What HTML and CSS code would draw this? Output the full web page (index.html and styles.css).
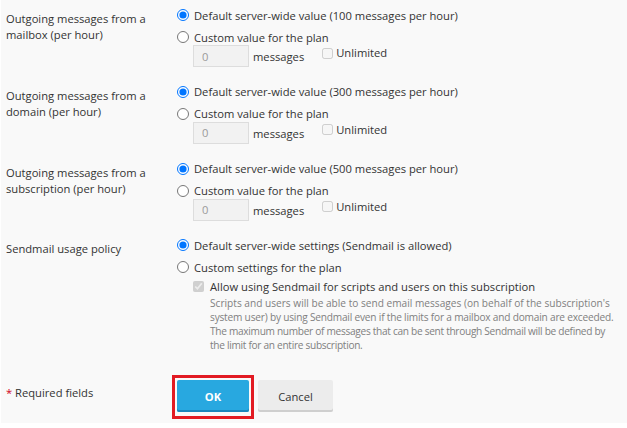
FILE: index.html
```html
<!DOCTYPE html>
<html>
<head>
<meta charset="utf-8">
<link rel="stylesheet" href="styles.css">
</head>
<body>
<div class="page">
  <div class="row">
    <div class="label">Outgoing messages from a mailbox (per hour)</div>
    <div class="field">
      <label class="opt"><input type="radio" name="r1" checked><span>Default server-wide value (100 messages per hour)</span></label>
      <label class="opt"><input type="radio" name="r1"><span>Custom value for the plan</span></label>
      <div class="limit"><input class="num" type="text" value="0" disabled><span class="unit">messages</span><label class="unl"><input type="checkbox" disabled><span>Unlimited</span></label></div>
    </div>
  </div>
  <div class="row">
    <div class="label">Outgoing messages from a domain (per hour)</div>
    <div class="field">
      <label class="opt"><input type="radio" name="r2" checked><span>Default server-wide value (300 messages per hour)</span></label>
      <label class="opt"><input type="radio" name="r2"><span>Custom value for the plan</span></label>
      <div class="limit"><input class="num" type="text" value="0" disabled><span class="unit">messages</span><label class="unl"><input type="checkbox" disabled><span>Unlimited</span></label></div>
    </div>
  </div>
  <div class="row">
    <div class="label">Outgoing messages from a subscription (per hour)</div>
    <div class="field">
      <label class="opt"><input type="radio" name="r3" checked><span>Default server-wide value (500 messages per hour)</span></label>
      <label class="opt"><input type="radio" name="r3"><span>Custom value for the plan</span></label>
      <div class="limit"><input class="num" type="text" value="0" disabled><span class="unit">messages</span><label class="unl"><input type="checkbox" disabled><span>Unlimited</span></label></div>
    </div>
  </div>
  <div class="row">
    <div class="label">Sendmail usage policy</div>
    <div class="field">
      <label class="opt"><input type="radio" name="r4" checked><span>Default server-wide settings (Sendmail is allowed)</span></label>
      <label class="opt"><input type="radio" name="r4"><span>Custom settings for the plan</span></label>
      <div class="allow">
        <label class="chk"><input type="checkbox" checked disabled><span>Allow using Sendmail for scripts and users on this subscription</span></label>
        <p class="hint"><span class="ln">Scripts and users will be able to send email messages (on behalf of the subscription's</span> <span class="ln t2">system user) by using Sendmail even if the limits for a mailbox and domain are exceeded.</span> <span class="ln tight">The maximum number of messages that can be sent through Sendmail will be defined by</span> <span class="ln tight">the limit for an entire subscription.</span></p>
      </div>
    </div>
  </div>
  <div class="actions">
    <div class="req"><span class="star">*</span> Required fields</div>
    <div class="buttons">
      <span class="highlight"><button class="btn ok" type="button">OK</button></span>
      <button class="btn cancel" type="button">Cancel</button>
    </div>
  </div>
</div>
</body>
</html>
```

FILE: styles.css
```css
* { box-sizing: border-box; }
html, body { margin: 0; padding: 0; background: #ffffff; }
body {
  font-family: "Open Sans", "Liberation Sans", sans-serif;
  font-size: 11.2px;
  color: #333333;
}
.page {
  margin-left: 1px;
  height: 423px;
  background: #f9f9f9;
  padding: 7px 0 0 5px;
}
.row {
  display: grid;
  grid-template-columns: 170px 1fr;
  margin-bottom: 16.8px;
}
.label {
  width: 150px;
  line-height: 16px;
  padding-top: 4px;
}
.field {
  display: flex;
  flex-direction: column;
}
.opt {
  display: flex;
  align-items: center;
  height: 16px;
  margin-bottom: 6px;
}
.opt + .opt { margin-bottom: 0; }
.opt input {
  width: 12px;
  height: 12px;
  margin: 0 5px 0 1px;
}
.limit {
  display: flex;
  align-items: flex-start;
  padding-left: 17px;
}
.num {
  width: 56px;
  height: 22px;
  border: 1px solid #dddddd;
  background: #f2f2f2;
  color: #9a9a9a;
  font: inherit;
  padding: 0 8px;
}
.unit {
  margin: 4px 0 0 4px;
  line-height: 16px;
}
.unl {
  display: flex;
  align-items: center;
  margin: 0 0 0 18px;
  line-height: 16px;
}
.unl input {
  width: 11px;
  height: 11px;
  margin: 0 3px 0 0;
}
.allow {
  padding-left: 17px;
  padding-top: 3px;
}
.chk {
  display: flex;
  align-items: center;
  height: 16px;
}
.chk input {
  width: 11px;
  height: 11px;
  margin: 0 6px 0 0;
}
.hint {
  margin: 2px 0 0 17px;
  font-size: 10.15px;
  line-height: 14px;
  color: #808080;
}
.ln {
  display: block;
  white-space: nowrap;
}
.tight { letter-spacing: -0.3px; }
.t2 { letter-spacing: -0.2px; }
.actions {
  display: grid;
  grid-template-columns: 166px 1fr;
  margin-top: 28px;
}
.req {
  padding-top: 5px;
  line-height: 16px;
}
.star { color: #d0021b; }
.buttons {
  display: flex;
  align-items: flex-start;
}
.highlight {
  display: inline-block;
  border: 3px solid #e21b23;
  padding: 2px 2px 4px 2px;
  margin-top: -5px;
}
.btn {
  font-family: inherit;
  font-size: 11.2px;
  height: 32px;
  border: 0;
  border-radius: 2px;
  cursor: pointer;
}
.ok {
  width: 72px;
  background: #28a8e0;
  color: #ffffff;
  font-weight: bold;
  box-shadow: inset 0 -2px 0 #1a87bd;
}
.cancel {
  width: 75px;
  margin-left: 4px;
  background: #ececec;
  color: #333333;
  box-shadow: inset 0 -2px 0 #cfcfcf;
}
```
